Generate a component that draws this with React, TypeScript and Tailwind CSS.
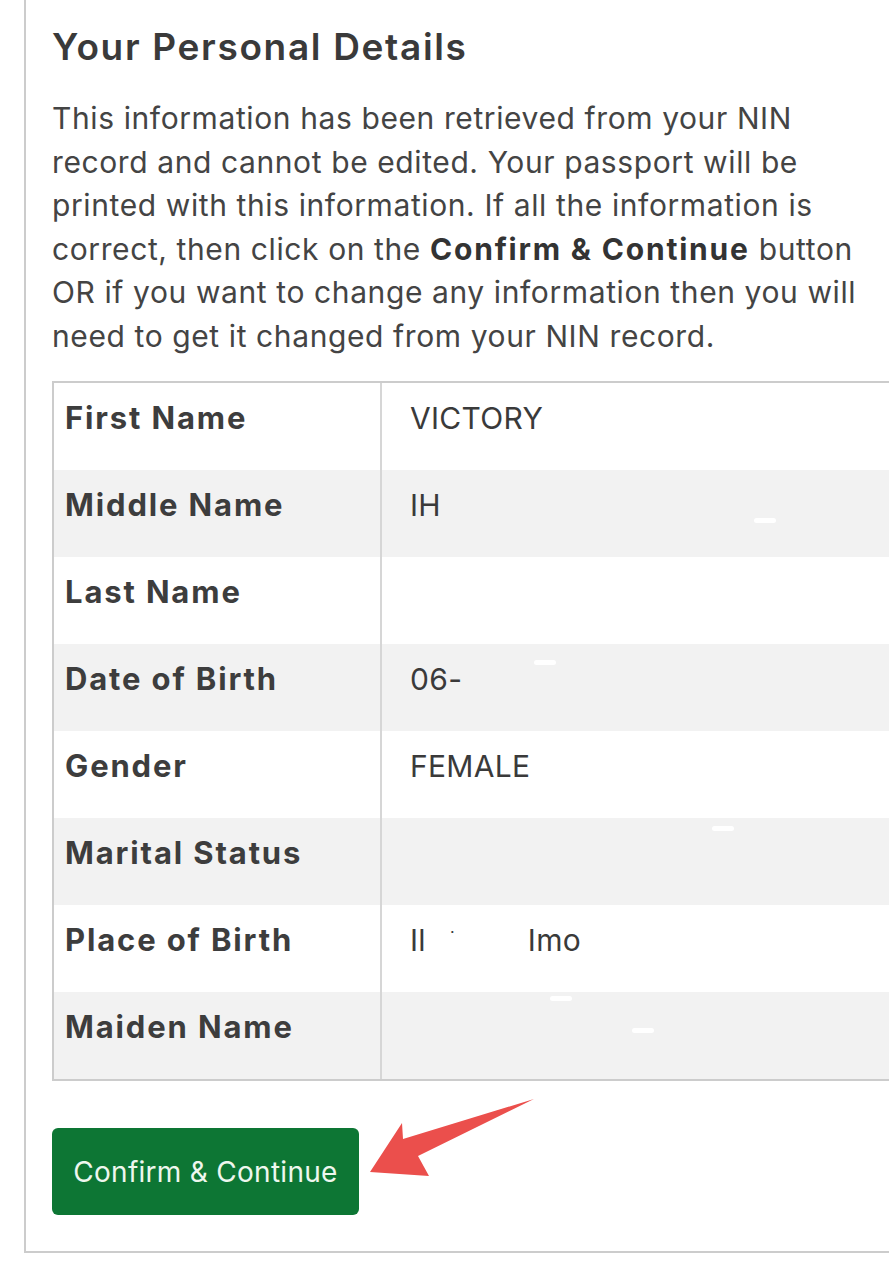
const rows = [
  { label: "First Name", value: "VICTORY" },
  { label: "Middle Name", value: "IH" },
  { label: "Last Name", value: "" },
  { label: "Date of Birth", value: "06-" },
  { label: "Gender", value: "FEMALE" },
  { label: "Marital Status", value: "" },
  { label: "Place of Birth", value: "place" },
  { label: "Maiden Name", value: "" },
];

// little white smudges left over from the redaction in the screenshot
const smudges: Record<number, string[]> = {
  1: ["left-[372px] top-[48px]"],
  3: ["left-[152px] top-[16px]"],
  5: ["left-[330px] top-[8px]"],
  7: ["left-[168px] top-[4px]", "left-[250px] top-[36px]"],
};

function Arrow() {
  return (
    <svg className="absolute left-[366px] top-[1096px]" width="172" height="90" viewBox="0 0 172 90">
      <polygon points="4,76 36,27 37,43 168,3 52,60 63,80" fill="#eb4f4c" />
    </svg>
  );
}

export default function App() {
  return (
    <div className="relative w-[889px] h-[1280px] overflow-hidden bg-white font-['Inter',sans-serif]">
      {/* panel */}
      <div className="ml-[24px] w-[1000px] border-l-2 border-b-2 border-[#cccccc] pl-[26px] pt-[24px] pb-[36px]">
        <h2 className="text-[37px] leading-[46px] font-semibold tracking-[0.045em] text-[#3a3a3a]">
          Your Personal Details
        </h2>
        <p className="mt-[27px] w-[830px] text-[30px] leading-[43.5px] tracking-[0.02em] text-[#444444]">
          This information has been retrieved from your NIN record and cannot be edited. Your passport will be printed with
          this information. If all the information is correct, then click on the{" "}
          <span className="font-bold tracking-[0.06em] text-[#333333]">Confirm &amp; Continue</span> button OR if you want
          to change any information then you will need to get it changed from your NIN record.
        </p>

        <div className="mt-[23px] border-2 border-r-0 border-[#cccccc]">
          {rows.map((r, i) => (
            <div key={r.label} className={`flex h-[87px] ${i % 2 === 1 ? "bg-[#f2f2f2]" : "bg-white"}`}>
              <div className="w-[328px] shrink-0 border-r-2 border-[#d6d6d6] pl-[11px] pt-[15px] text-[31px] leading-[40px] font-bold tracking-[0.06em] text-[#3d3d3d]">
                {r.label}
              </div>
              <div className="relative flex-1 pl-[28px] pt-[15px] text-[30px] leading-[40px] tracking-[0.01em] text-[#3a3a3a]">
                {r.value === "place" ? (
                  <span className="flex items-start gap-[24px]">
                    <span>Il</span>
                    <span className="-mt-[8px] text-[16px]">·</span>
                    <span className="ml-[49px]">Imo</span>
                  </span>
                ) : (
                  r.value
                )}
                {(smudges[i] || []).map((pos) => (
                  <span key={pos} className={`absolute ${pos} h-[5px] w-[22px] rounded-full bg-white`} />
                ))}
              </div>
            </div>
          ))}
        </div>

        <button className="mt-[47px] h-[87px] w-[307px] rounded-[6px] bg-[#0d7634] text-[28px] tracking-[0.01em] text-[#eef7ee]">
          Confirm &amp; Continue
        </button>
      </div>
      <Arrow />
    </div>
  );
}
